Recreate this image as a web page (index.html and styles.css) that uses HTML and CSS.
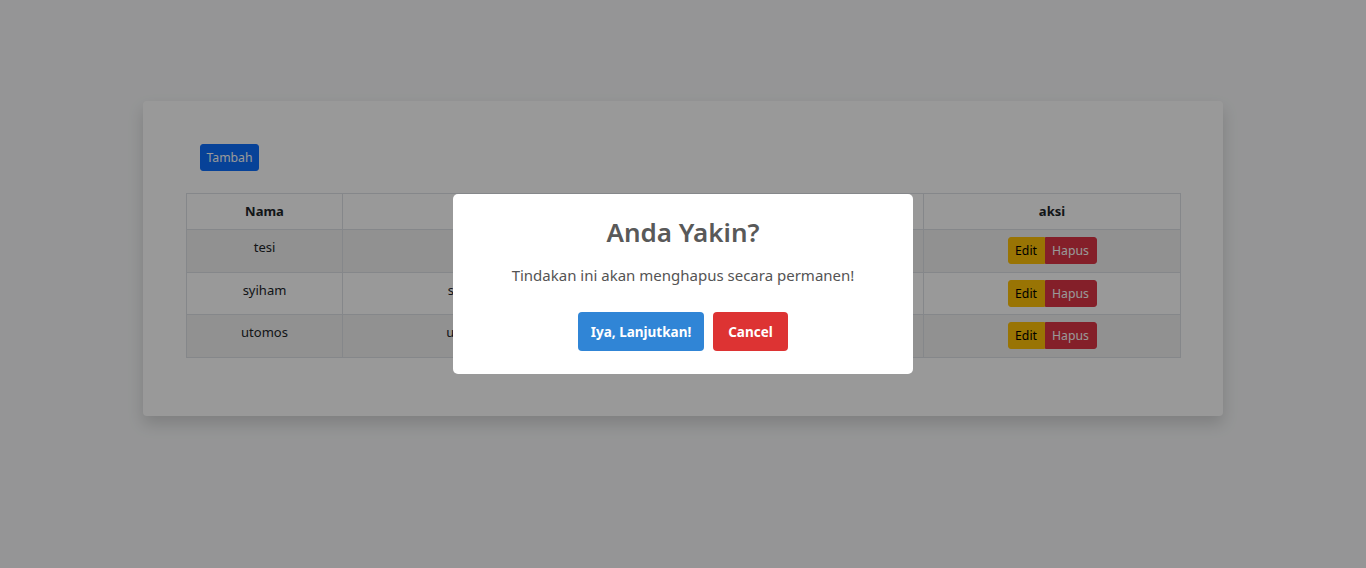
FILE: index.html
```html
<!DOCTYPE html>
<html lang="id">
<head>
<meta charset="utf-8">
<title>Data</title>
<link rel="stylesheet" href="styles.css">
</head>
<body>
<div class="page">
  <div class="card">
    <div class="toolbar"><button class="btn btn-primary">Tambah</button></div>
    <table class="table">
      <thead>
        <tr>
          <th class="c-nama">Nama</th>
          <th class="c-email">Email</th>
          <th class="c-alamat">Alamat</th>
          <th class="c-aksi">aksi</th>
        </tr>
      </thead>
      <tbody>
        <tr class="odd">
          <td>tesi</td><td>tesi@gmail.com</td><td>jakarta</td>
          <td><div class="group"><button class="btn btn-warning g-first">Edit</button><button class="btn btn-danger g-last">Hapus</button></div></td>
        </tr>
        <tr>
          <td>syiham</td><td>syiham@gmail.com</td><td>bandung</td>
          <td><div class="group"><button class="btn btn-warning g-first">Edit</button><button class="btn btn-danger g-last">Hapus</button></div></td>
        </tr>
        <tr class="odd">
          <td>utomos</td><td>utomos@gmail.com</td><td>surabaya</td>
          <td><div class="group"><button class="btn btn-warning g-first">Edit</button><button class="btn btn-danger g-last">Hapus</button></div></td>
        </tr>
      </tbody>
    </table>
  </div>
</div>
<div class="overlay">
  <div class="popup">
    <h2 class="popup-title">Anda Yakin?</h2>
    <div class="popup-text">Tindakan ini akan menghapus secara permanen!</div>
    <div class="popup-actions">
      <button class="sbtn sbtn-confirm">Iya, Lanjutkan!</button>
      <button class="sbtn sbtn-cancel">Cancel</button>
    </div>
  </div>
</div>
</body>
</html>
```

FILE: styles.css
```css
* { box-sizing: border-box; }
html, body { margin: 0; padding: 0; }
body {
  background: #f8f9fa;
  font-family: "Segoe UI", "Noto Sans", "Open Sans", sans-serif;
  font-size: 13px;
  line-height: 21px;
  color: #212529;
  height: 568px;
  overflow: hidden;
}
.page {
  padding-top: 101px;
  display: flex;
  justify-content: center;
}
.card {
  width: 1080px;
  background: #fff;
  border-radius: 4px;
  box-shadow: 0 8px 16px rgba(0,0,0,0.15);
  padding: 43px 43px 58px 43px;
}
.toolbar {
  padding-left: 14px;
  margin-bottom: 22px;
  display: flex;
}
.btn {
  font-family: inherit;
  font-size: 12.25px;
  line-height: 17px;
  padding: 4px 0;
  border: 1px solid transparent;
  border-radius: 3px;
  cursor: pointer;
  height: 27px;
  white-space: nowrap;
}
.btn-primary { background: #0d6efd; border-color: #0d6efd; color: #fff; width: 59px; }
.btn-warning { background: #ffc107; border-color: #ffc107; color: #000; width: 37px; }
.btn-danger { background: #dc3545; border-color: #dc3545; color: #fff; width: 52px; }
.table {
  width: 994px;
  border-collapse: collapse;
  table-layout: fixed;
}
.table th, .table td {
  border: 1px solid #dee2e6;
  padding: 7px 8px;
  text-align: center;
  vertical-align: top;
}
.table td { height: 42px; }
.table tr.odd td { height: 43px; }
.table th { font-weight: 700; }
.c-nama { width: 156px; }
.c-email { width: 330px; }
.c-alamat { width: 251px; }
.c-aksi { width: 257px; }
.table tbody tr.odd td { background: #f2f2f2; }
.group { display: inline-flex; }
.g-first { border-top-right-radius: 0; border-bottom-right-radius: 0; }
.g-last { border-top-left-radius: 0; border-bottom-left-radius: 0; }

.overlay {
  position: fixed;
  inset: 0;
  background: rgba(0,0,0,0.4);
  display: flex;
  align-items: center;
  justify-content: center;
}
.popup {
  width: 460px;
  height: 180px;
  background: #fff;
  border-radius: 5px;
  padding: 20px 16px 23px;
  display: flex;
  flex-direction: column;
  align-items: center;
}
.popup-title {
  margin: 0;
  font-size: 26px;
  font-weight: 600;
  line-height: 36px;
  color: #595959;
}
.popup-text {
  margin-top: 12px;
  font-size: 15px;
  line-height: 27px;
  color: #545454;
}
.popup-actions {
  margin-top: 23px;
  display: flex;
  gap: 9px;
}
.sbtn {
  font-family: inherit;
  height: 39px;
  border: 0;
  border-radius: 4px;
  color: #fff;
  font-size: 13.5px;
  font-weight: 700;
  padding: 0;
  white-space: nowrap;
  cursor: pointer;
}
.sbtn-confirm { background: #3085d6; width: 126px; }
.sbtn-cancel { background: #dd3333; width: 75px; }
```
